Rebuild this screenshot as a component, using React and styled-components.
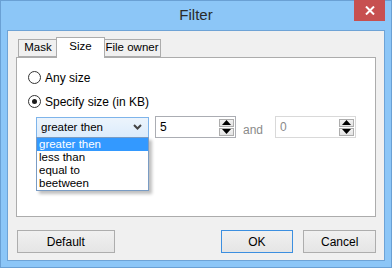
import React from "react";
import styled, { createGlobalStyle } from "styled-components";

const Global = createGlobalStyle`
  html, body { margin: 0; padding: 0; background: #fff; }
  body { font-family: "Liberation Sans", Arial, sans-serif; font-size: 11px; color: #000; }
  * { box-sizing: border-box; }
`;

const Window = styled.div`
  width: 392px;
  height: 268px;
  background: #8cc6f7;
  border: 1px solid #6aa0d4;
  display: flex;
  flex-direction: column;
`;

const TitleBar = styled.div`
  height: 29px;
  position: relative;
  display: flex;
  align-items: center;
  justify-content: center;
`;

const Title = styled.div`
  font-family: "Liberation Sans", Arial, sans-serif;
  font-size: 15px;
  color: #2a2a2a;
  margin-top: -2px;
`;

const CloseBtn = styled.div`
  position: absolute;
  top: -1px;
  right: 6px;
  width: 31px;
  height: 21px;
  background: #c75050;
  display: flex;
  align-items: center;
  justify-content: center;
`;

const Client = styled.div`
  flex: 1;
  margin: 0 6px 6px 6px;
  background: #f0f0f0;
  border: 1px solid #6ea3d6;
  padding: 6px 8px 7px 8px;
  display: flex;
  flex-direction: column;
`;

const TabStrip = styled.div`
  display: flex;
  align-items: flex-end;
  padding-left: 2px;
  height: 20px;
  position: relative;
  z-index: 1;
`;

const Tab = styled.div`
  height: ${(p) => (p.$active ? "21px" : "18px")};
  padding: ${(p) => (p.$active ? "2px 0 0 0" : "1px 0 0 0")};
  width: ${(p) => p.$w}px;
  margin: ${(p) => (p.$active ? "0 -2px" : "0")};
  background: ${(p) => (p.$active ? "#fff" : "#f0f0f0")};
  border: 1px solid #acacac;
  border-bottom: ${(p) => (p.$active ? "none" : "1px solid #acacac")};
  text-align: center;
  white-space: nowrap;
  font-size: 11.5px;
  position: relative;
  z-index: ${(p) => (p.$active ? 2 : 1)};
  margin-bottom: ${(p) => (p.$active ? "-1px" : "0")};
`;

const Panel = styled.div`
  height: 160px;
  background: #fff;
  border: 1px solid #acacac;
  position: relative;
  padding: 13px 0 0 11px;
  display: flex;
  flex-direction: column;
`;

const RadioRow = styled.label`
  display: flex;
  align-items: center;
  gap: 4px;
  height: 13px;
  margin-bottom: ${(p) => p.$mb || 0}px;
  font-size: 12px;
  white-space: nowrap;
`;

const RadioCircle = styled.span`
  width: 13px;
  height: 13px;
  border-radius: 50%;
  border: 1px solid #333;
  background: #fff;
  display: flex;
  align-items: center;
  justify-content: center;
  &::after {
    content: "";
    width: 5px;
    height: 5px;
    border-radius: 50%;
    background: ${(p) => (p.$checked ? "#1a1a1a" : "transparent")};
  }
`;

const ControlRow = styled.div`
  display: flex;
  align-items: center;
  margin: 8px 0 0 8px;
  position: relative;
`;

const Combo = styled.div`
  width: 113px;
  height: 21px;
  border: 1px solid #7eb4ea;
  background: linear-gradient(#ecf4fc, #dcecfc);
  display: flex;
  align-items: center;
  padding: 0 6px 0 4px;
  justify-content: space-between;
  font-size: 11.5px;
  white-space: nowrap;
`;

const DropList = styled.div`
  position: absolute;
  left: 0;
  top: 21px;
  width: 113px;
  border: 1px solid #7a9cc4;
  background: #fff;
  box-shadow: 3px 3px 3px rgba(0, 0, 0, 0.25);
  padding: 0;
  z-index: 5;
`;

const Item = styled.div`
  height: 13px;
  line-height: 13px;
  padding-left: 2px;
  font-size: 11.5px;
  white-space: nowrap;
  background: ${(p) => (p.$sel ? "#3399ff" : "transparent")};
  color: ${(p) => (p.$sel ? "#fff" : "#000")};
`;

const Spin = styled.div`
  width: 81px;
  height: 22px;
  border: 1px solid ${(p) => (p.$disabled ? "#d9d9d9" : "#abadb3")};
  background: #fff;
  display: flex;
  align-items: center;
  justify-content: space-between;
  padding: 0 1px 0 4px;
  margin-left: ${(p) => p.$ml}px;
  color: ${(p) => (p.$disabled ? "#8a8a8a" : "#000")};
  font-size: 12px;
`;

const SpinBtns = styled.div`
  display: flex;
  flex-direction: column;
  gap: 1px;
`;

const SpinBtn = styled.div`
  width: 15px;
  height: 8px;
  border: 1px solid #adadad;
  background: linear-gradient(#f2f2f2, #e3e3e3);
  display: flex;
  align-items: center;
  justify-content: center;
`;

const And = styled.span`
  color: #8a8a8a;
  margin-left: 7px;
  margin-top: 6px;
  font-size: 12px;
`;

const ButtonRow = styled.div`
  display: flex;
  margin-top: 13px;
  padding: 0 0 0 1px;
`;

const Button = styled.div`
  width: ${(p) => p.$w}px;
  height: 23px;
  border: 1px solid ${(p) => (p.$def ? "#3c8fe0" : "#adadad")};
  background: linear-gradient(#f0f0f0, #e5e5e5);
  display: flex;
  align-items: center;
  justify-content: center;
  font-size: 12px;
  margin-left: ${(p) => p.$ml || 0}px;
`;

const Arrow = ({ up }) => (
  <svg width="9" height="5" viewBox="0 0 9 5">
    <path d={up ? "M0 5 L4.5 0 L9 5 Z" : "M0 0 L4.5 5 L9 0 Z"} fill="#000" />
  </svg>
);

export default function App() {
  return (
    <>
      <Global />
      <Window>
        <TitleBar>
          <Title>Filter</Title>
          <CloseBtn>
            <svg width="10" height="9" viewBox="0 0 10 9">
              <path d="M1 0.5 L9 8.5 M9 0.5 L1 8.5" stroke="#fff" strokeWidth="2" />
            </svg>
          </CloseBtn>
        </TitleBar>
        <Client>
          <TabStrip>
            <Tab $w={40}>Mask</Tab>
            <Tab $w={49} $active>Size</Tab>
            <Tab $w={58}>File owner</Tab>
          </TabStrip>
          <Panel>
            <RadioRow $mb={11}>
              <RadioCircle />
              Any size
            </RadioRow>
            <RadioRow>
              <RadioCircle $checked />
              Specify size (in KB)
            </RadioRow>
            <ControlRow>
              <Combo>
                <span>greater then</span>
                <svg width="9" height="6" viewBox="0 0 9 6">
                  <path d="M1 1 L4.5 4.5 L8 1" stroke="#444" strokeWidth="2" fill="none" />
                </svg>
              </Combo>
              <DropList>
                <Item $sel>greater then</Item>
                <Item>less than</Item>
                <Item>equal to</Item>
                <Item>beetween</Item>
              </DropList>
              <Spin $ml={6}>
                <span>5</span>
                <SpinBtns>
                  <SpinBtn><Arrow up /></SpinBtn>
                  <SpinBtn><Arrow /></SpinBtn>
                </SpinBtns>
              </Spin>
              <And>and</And>
              <Spin $ml={12} $disabled>
                <span>0</span>
                <SpinBtns>
                  <SpinBtn><Arrow up /></SpinBtn>
                  <SpinBtn><Arrow /></SpinBtn>
                </SpinBtns>
              </Spin>
            </ControlRow>
          </Panel>
          <ButtonRow>
            <Button $w={98}>Default</Button>
            <Button $w={73} $ml={106} $def>OK</Button>
            <Button $w={73} $ml={10}>Cancel</Button>
          </ButtonRow>
        </Client>
      </Window>
    </>
  );
}
